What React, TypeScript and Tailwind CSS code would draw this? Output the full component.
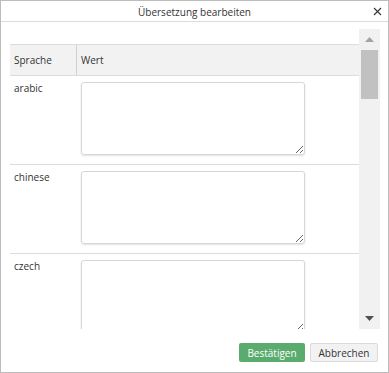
import React from "react"

const languages = ["arabic", "chinese", "czech"]

export default function App() {
  return (
    <div className="w-[389px] h-[373px] bg-white border border-[#bcbcbc] flex flex-col text-[#333] text-[10px]" style={{ fontFamily: '"Open Sans", sans-serif' }}>
      <div className="h-[21px] shrink-0 border-b border-[#dcdcdc] flex items-center relative">
        <div className="flex-1 text-center text-[10px] leading-none pt-[1px]">Übersetzung bearbeiten</div>
        <button className="absolute right-[6px] top-[5px] w-[10px] h-[10px] flex items-center justify-center">
          <svg width="9" height="9" viewBox="0 0 9 9">
            <path d="M1 1L8 8M8 1L1 8" stroke="#333" strokeWidth="1.1" />
          </svg>
        </button>
      </div>

      <div className="flex ml-[9px] mr-[8px] mt-[7px] h-[300px] shrink-0">
        <div className="flex-1 overflow-hidden pt-[15px]">
          <div className="h-[32px] bg-[#f2f2f2] border-y border-[#dcdcdc] flex items-center">
            <div className="w-[67px] pl-[4px] border-r border-[#cfcfcf] h-full flex items-center">Sprache</div>
            <div className="pl-[4px]">Wert</div>
          </div>
          {languages.map((lang) => (
            <div key={lang} className="flex border-b border-[#dcdcdc] h-[89px]">
              <div className="w-[67px] pl-[4px] pt-[5px]">{lang}</div>
              <div className="pl-[4px] pt-[6px]">
                <textarea className="w-[224px] h-[73px] border border-[#d6d6d6] rounded-[3px] shadow-[0_1px_2px_rgba(0,0,0,0.12)] outline-none" />
              </div>
            </div>
          ))}
        </div>
        <div className="w-[21px] bg-[#f1f1f1] flex flex-col items-center">
          <div className="h-[21px] w-full flex items-center justify-center">
            <svg width="9" height="5" viewBox="0 0 9 5"><path d="M4.5 0L9 5H0z" fill="#a3a3a3" /></svg>
          </div>
          <div className="w-[17px] h-[49px] bg-[#c1c1c1]" />
          <div className="flex-1" />
          <div className="h-[21px] w-full flex items-center justify-center">
            <svg width="9" height="5" viewBox="0 0 9 5"><path d="M0 0H9L4.5 5z" fill="#505050" /></svg>
          </div>
        </div>
      </div>

      <div className="flex justify-end gap-[5px] mt-[14px] mr-[10px]">
        <button className="h-[19px] w-[66px] rounded-[2px] bg-[#5aac6e] text-white text-[10px] leading-none">Bestätigen</button>
        <button className="h-[19px] w-[68px] rounded-[2px] bg-[#f2f2f2] border border-[#dadada] text-[#333] text-[10px] leading-none">Abbrechen</button>
      </div>
    </div>
  )
}
